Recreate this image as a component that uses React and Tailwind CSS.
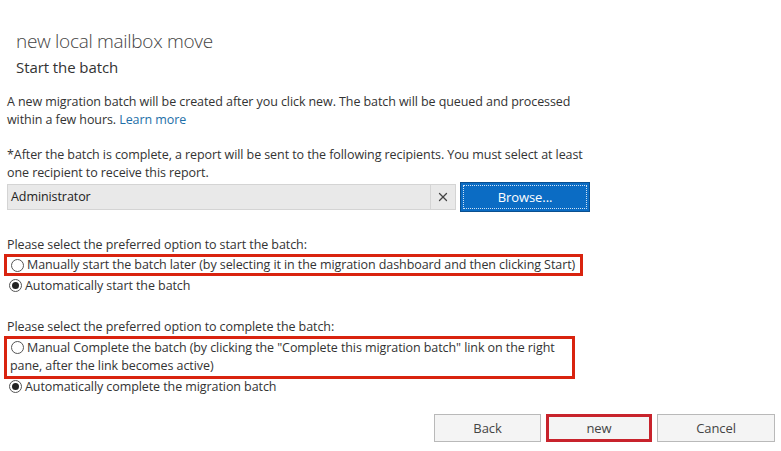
import { X } from 'lucide-react';

const font = { fontFamily: '"Open Sans", "Noto Sans", sans-serif' };

function Radio({ checked }) {
  return (
    <span className="mt-[2px] grid size-[13px] shrink-0 place-items-center rounded-full border border-[#555] bg-white">
      {checked ? <span className="size-[7px] rounded-full bg-[#222]" /> : null}
    </span>
  );
}

function Option({ checked, children, className = '' }) {
  return (
    <div className={`flex items-start gap-[3px] ${className}`}>
      <Radio checked={checked} />
      <span>{children}</span>
    </div>
  );
}

export default function App() {
  return (
    <div
      className="h-[451px] w-[781px] overflow-hidden bg-white text-[12.5px] leading-[18px] tracking-[-0.08px] text-[#333]"
      style={font}
    >
      <div className="pl-4 pt-[29px]">
        <h1 className="text-[19px] font-light leading-[24px] tracking-[-0.3px] text-[#444]">new local mailbox move</h1>
        <p className="mt-[5px] text-[15px] leading-[18px] text-[#333]">Start the batch</p>
      </div>

      <div className="px-[7px]">
        <p className="mt-[17px]">
          A new migration batch will be created after you click new. The batch will be queued and processed
          <br />
          within a few hours. <span className="text-[#1e6fa8]">Learn more</span>
        </p>

        <p className="mt-[17px]">
          *After the batch is complete, a report will be sent to the following recipients. You must select at least
          <br />
          one recipient to receive this report.
        </p>

        <div className="flex items-center">
          <div className="flex h-[26px] w-[449px] items-center border border-[#d4d4d4] bg-[#e9e9e9]">
            <span className="flex-1 pl-[3px] text-[#222]">Administrator</span>
            <span className="grid h-full w-[25px] place-items-center border-l border-[#d4d4d4] text-[#444]">
              <X size={14} strokeWidth={2.2} />
            </span>
          </div>
          <button
            type="button"
            className="ml-[4px] h-[30px] w-[130px] border border-[#0a4f8f] bg-[#0b6cc4] p-[2px] text-[13px] text-white"
          >
            <span className="grid h-full place-items-center border border-dotted border-white/80">Browse...</span>
          </button>
        </div>

        <p className="mt-[24px]">Please select the preferred option to start the batch:</p>
      </div>

      <div className="ml-[4px] w-[579px] border-[3px] border-[#d9230f] pl-[4px] leading-[16px]">
        <Option>Manually start the batch later (by selecting it in the migration dashboard and then clicking Start)</Option>
      </div>
      <Option checked className="mt-[1px] pl-[9px]">Automatically start the batch</Option>

      <p className="mt-[23px] px-[7px]">Please select the preferred option to complete the batch:</p>
      <div className="ml-[4px] w-[571px] border-[3px] border-[#d9230f] pb-[2px] pl-[4px] leading-[17px]">
        <Option>Manual Complete the batch (by clicking the "Complete this migration batch" link on the right</Option>
        <div className="-ml-[1px] mt-[1px]">pane, after the link becomes active)</div>
      </div>
      <Option checked className="-mt-px pl-[9px]">Automatically complete the migration batch</Option>

      <div className="mt-[18px] flex justify-end gap-[5px] pr-[6px] text-[13px] text-[#444]">
        <button type="button" className="h-[28px] w-[107px] border border-[#b9b9b9] bg-[#f4f4f4]">Back</button>
        <button type="button" className="h-[28px] w-[106px] border-[3px] border-[#c8232c] bg-[#f4f4f4]">new</button>
        <button type="button" className="h-[28px] w-[118px] border border-[#b9b9b9] bg-[#f4f4f4]">Cancel</button>
      </div>
    </div>
  );
}
